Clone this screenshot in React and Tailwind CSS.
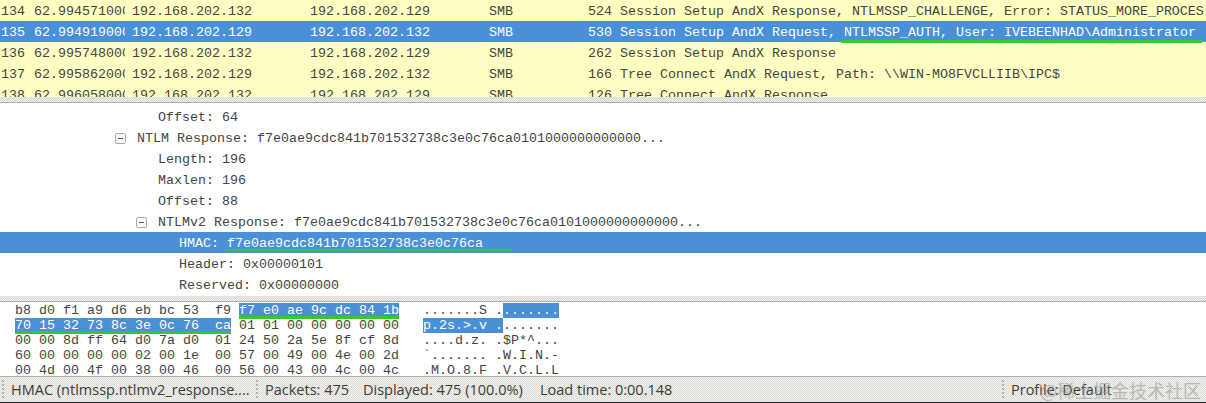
import React from "react";

const packets = [
  { no: 134, time: "62.994571000", src: "192.168.202.132", dst: "192.168.202.129", len: 524, info: "Session Setup AndX Response, NTLMSSP_CHALLENGE, Error: STATUS_MORE_PROCES" },
  { no: 135, time: "62.994919000", src: "192.168.202.129", dst: "192.168.202.132", len: 530, info: "Session Setup AndX Request, ", mark: "NTLMSSP_AUTH, User: IVEBEENHAD\\Administrator", selected: true },
  { no: 136, time: "62.995748000", src: "192.168.202.132", dst: "192.168.202.129", len: 262, info: "Session Setup AndX Response" },
  { no: 137, time: "62.995862000", src: "192.168.202.129", dst: "192.168.202.132", len: 166, info: "Tree Connect AndX Request, Path: \\\\WIN-MO8FVCLLIIB\\IPC$" },
  { no: 138, time: "62.996058000", src: "192.168.202.132", dst: "192.168.202.129", len: 126, info: "Tree Connect AndX Response" },
];

const details = [
  { indent: "pl-[158px]", text: "Offset: 64" },
  { indent: "pl-[115px]", text: "NTLM Response: f7e0ae9cdc841b701532738c3e0c76ca0101000000000000...", open: true },
  { indent: "pl-[158px]", text: "Length: 196" },
  { indent: "pl-[158px]", text: "Maxlen: 196" },
  { indent: "pl-[158px]", text: "Offset: 88" },
  { indent: "pl-[136px]", text: "NTLMv2 Response: f7e0ae9cdc841b701532738c3e0c76ca0101000000000000...", open: true },
  { indent: "pl-[179px]", text: "HMAC: ", mark: "f7e0ae9cdc841b701532738c3e0c76ca", selected: true },
  { indent: "pl-[179px]", text: "Header: 0x00000101" },
  { indent: "pl-[179px]", text: "Reserved: 0x00000000" },
];

const hexRows = [
  ["00 00 8d ff 64 d0 7a d0  01 24 50 2a 5e 8f cf 8d   ....d.z. .$P*^..."],
  ["60 00 00 00 00 02 00 1e  00 57 00 49 00 4e 00 2d   `....... .W.I.N.-"],
  ["00 4d 00 4f 00 38 00 46  00 56 00 43 00 4c 00 4c   .M.O.8.F .V.C.L.L"],
];

const Splitter = ({ h }) => (
  <div className={`${h} shrink-0 border-b border-[#b0b0ac] bg-[#e6e6e2] bg-[repeating-conic-gradient(#d2d2ce_0_25%,#f2f2ee_0_50%)] bg-[length:2px_2px]`} />
);

const Blue = ({ children }) => <span className="bg-[#4a90d9] text-white">{children}</span>;

const Marked = ({ children }) => (
  <span className="relative">
    <Blue>{children}</Blue>
    <span className="absolute left-0 right-0 top-[13px] h-[3px] bg-[#2ecc2e]" />
  </span>
);

const Grip = () => (
  <span className="h-[20px] w-[2px] shrink-0 bg-[repeating-linear-gradient(to_bottom,#b4b4b0_0_2px,transparent_2px_4px)]" />
);

export default function App() {
  return (
    <div className="relative flex h-[403px] w-[1206px] flex-col overflow-hidden bg-white font-['Liberation_Mono',monospace] text-[13.33px] text-[#444442]">
      <div className="h-[97px] shrink-0 overflow-hidden">
        {packets.map((p) => (
          <div
            key={p.no}
            className={`flex h-[21px] shrink-0 items-center whitespace-pre pt-[2px] ${
              p.selected ? "bg-[#4a90d9] text-white" : "bg-[#ffffc4]"
            }`}
          >
            <span className="w-[34px] shrink-0 pl-[1px]">{p.no}</span>
            <span className="w-[91px] shrink-0 overflow-hidden">{p.time}</span>
            <span className="ml-[7px] w-[178px] shrink-0">{p.src}</span>
            <span className="w-[179px] shrink-0">{p.dst}</span>
            <span className="w-[99px] shrink-0">SMB</span>
            <span className="w-[24px] shrink-0 text-right">{p.len}</span>
            <span className="ml-[8px]">
              {p.info}
              {p.mark && (
                <span className="relative">
                  {p.mark}
                  <span className="absolute left-[-3px] right-[-6px] top-[15px] h-[3px] bg-[#2ecc2e]" />
                </span>
              )}
            </span>
          </div>
        ))}
      </div>
      <Splitter h="h-[6px]" />

      <div className="h-[193px] shrink-0 overflow-hidden pt-[3px]">
        {details.map((d, i) => (
          <div
            key={i}
            className={`flex h-[21px] items-center whitespace-pre pt-[2px] ${d.indent} ${
              d.selected ? "bg-[#4a90d9] text-white" : ""
            }`}
          >
            {d.open && (
              <svg width="11" height="11" viewBox="0 0 11 11" className="mr-[11px] shrink-0">
                <rect x="0.5" y="0.5" width="10" height="10" rx="1" fill="#fafafa" stroke="#a8a8a8" />
                <path d="M3 5.5h5" stroke="#555" />
              </svg>
            )}
            <span>{d.text}</span>
            {d.mark && (
              <span className="relative">
                {d.mark}
                <span className="absolute left-[-1px] right-[-29px] top-[15px] h-[2px] bg-[#2ecc2e]" />
              </span>
            )}
          </div>
        ))}
      </div>
      <Splitter h="h-[6px]" />

      <div className="h-[74px] shrink-0 overflow-hidden bg-white pl-[15px] pt-[1px]">
        <div className="h-[15px] leading-[15px] whitespace-pre">
          {"b8 d0 f1 a9 d6 eb bc 53  f9 "}
          <Marked>f7 e0 ae 9c dc 84 1b</Marked>
          {"   .......S ."}
          <Blue>.......</Blue>
        </div>
        <div className="h-[15px] leading-[15px] whitespace-pre">
          <Marked>{"70 15 32 73 8c 3e 0c 76  ca"}</Marked>
          {" 01 01 00 00 00 00 00   "}
          <Blue>p.2s.&gt;.v .</Blue>
          .......
        </div>
        {hexRows.map((row, i) => (
          <div key={i} className="h-[15px] leading-[15px] whitespace-pre">
            {row[0]}
          </div>
        ))}
      </div>

      <div className="flex h-[27px] shrink-0 items-center border-t border-b border-t-[#b0b0ac] border-b-[#1c1c1c] bg-[#e6e6e2] bg-[repeating-conic-gradient(#dcdcd8_0_25%,#f0f0ec_0_50%)] bg-[length:2px_2px] font-['Open_Sans',sans-serif] text-[14.5px] text-[#3c3c3a]">
        <span className="ml-[2px] mr-[7px] h-[20px] w-[2px] shrink-0 bg-[repeating-linear-gradient(to_bottom,#b4b4b0_0_2px,transparent_2px_4px)]" />
        <span className="w-[245px] shrink-0 whitespace-pre">HMAC (ntlmssp.ntlmv2_response....</span>
        <Grip />
        <span className="ml-[7px] w-[98px] shrink-0 whitespace-pre">Packets: 475</span>
        <span className="w-[177px] shrink-0 whitespace-pre">Displayed: 475 (100.0%)</span>
        <span className="w-[462px] shrink-0 whitespace-pre">Load time: 0:00.148</span>
        <Grip />
        <span className="ml-[7px] whitespace-pre">Profile: Default</span>
      </div>

      <span className="absolute left-[1040px] top-[378px] font-['Noto_Sans_CJK_SC',sans-serif] text-[18px] leading-[24px] text-[#9a9a96] opacity-60">
        @稀土掘金技术社区
      </span>
    </div>
  );
}
